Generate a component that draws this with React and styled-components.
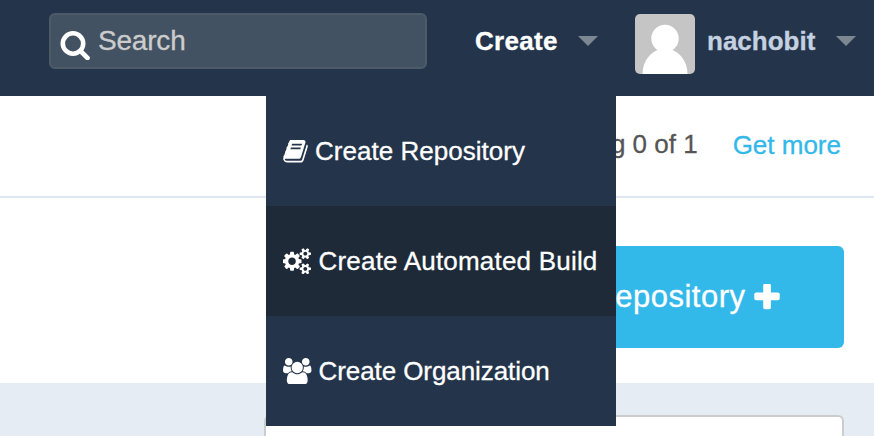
import React from 'react';
import styled, { createGlobalStyle } from 'styled-components';

const GlobalStyle = createGlobalStyle`
  *, *::before, *::after { box-sizing: border-box; }
  body {
    margin: 0;
    overflow: hidden;
    font-family: "Liberation Sans", Arial, sans-serif;
    font-size: 26px;
    line-height: 30px;
    background: #fff;
    -webkit-text-stroke: 0.3px currentColor;
  }
`;

const Page = styled.div`
  width: 874px;
  height: 436px;
  overflow: hidden;
  display: flex;
  flex-direction: column;
  position: relative;
`;

const TopBar = styled.header`
  flex: none;
  height: 96px;
  display: flex;
  align-items: flex-start;
  padding: 13px 18px 0 49px;
  background: #24354b;
`;

const SearchBox = styled.label`
  flex: none;
  width: 378px;
  height: 56px;
  display: flex;
  align-items: flex-start;
  gap: 8px;
  padding: 15px 10px 0 9px;
  border: 2px solid #4d5b69;
  border-radius: 6px;
  background: #435262;
`;

const SearchText = styled.span`
  color: #ccc;
  font-size: 28px;
  letter-spacing: -0.2px;
  margin-top: -4px;
`;

const NavItem = styled.div`
  display: flex;
  align-items: center;
  height: 56px;
  margin-left: ${(p) => p.$gap}px;
  color: ${(p) => p.$color};
  font-weight: 700;
  white-space: nowrap;
`;

const NavLabel = styled.span`
  width: ${(p) => p.$width}px;
  letter-spacing: ${(p) => p.$spacing || 0}px;
`;

const Caret = styled.i`
  border: 10px solid transparent;
  border-top-color: #7c8791;
  border-bottom: 0;
  margin-left: 20px;
`;

const Avatar = styled.svg`
  flex: none;
  width: 60px;
  height: 60px;
  margin: 5px 12px 0 0;
  border-radius: 5px;
`;

const Pager = styled.section`
  flex: none;
  height: 102px;
  display: flex;
  justify-content: flex-end;
  gap: 35px;
  padding: 33px 33px 0 0;
  border-bottom: 2px solid #dfe8f2;
  color: #555;
`;

const MoreLink = styled.a`
  color: #33b8ea;
  margin-top: 1px;
`;

const Actions = styled.section`
  flex: none;
  height: 185px;
  display: flex;
  justify-content: flex-end;
  padding: 48px 30px 0 0;
`;

const PrimaryButton = styled.button`
  width: 420px;
  height: 102px;
  display: flex;
  align-items: center;
  justify-content: flex-end;
  gap: 8.500px;
  padding: 0 64px 0 0;
  border: 0;
  border-radius: 6px;
  background: #33b8ea;
  color: #fff;
  font: 31px "Liberation Sans", Arial, sans-serif;
  letter-spacing: 0.5px;
`;

const ListArea = styled.section`
  flex: 1;
  padding: 32px 30px 0 264px;
  background: #e5ecf4;
  display: flex;
`;

const ListPanel = styled.div`
  flex: 1;
  border: 2px solid #ccc;
  border-bottom: 0;
  border-radius: 6px 6px 0 0;
  background: #fff;
`;

const Menu = styled.nav`
  position: absolute;
  top: 96px;
  left: 266px;
  width: 350px;
  background: #24354b;
`;

const MenuItem = styled.a`
  display: flex;
  align-items: center;
  height: 110px;
  padding-left: 17px;
  gap: 7px;
  color: #fff;
  white-space: nowrap;
  letter-spacing: ${(p) => p.$spacing}px;
  background: ${(p) => (p.$active ? '#1e2a38' : 'transparent')};
`;

const Icon = styled.svg`
  flex: none;
  width: ${(p) => p.$w}px;
  height: ${(p) => p.$h}px;
  fill: currentColor;
`;

const BOOK =
  'M1639 478q40 57 18 129l-275 906q-19 64-76.5 107.5t-122.5 43.5h-923q-77 0-148.5-53.5t-99.5-131.5q-24-67-2-127 0-4 3-27t4-37q1-8-3-21.5t-3-19.5q2-11 8-21t16.5-23.5 16.5-23.5q23-38 45-91.5t30-91.5q3-10 .5-30t-.5-28q3-11 17-28t17-23q21-36 42-92t25-90q1-9-2.5-32t.5-28q4-13 22-30.5t22-22.5q19-26 42.5-84.5t27.5-96.5q1-8-3-25.5t-2-26.5q2-8 9-18t18-23 17-21q8-12 16.5-30.5t15-35 16-36 19.5-32 26.5-23.5 36-11.5 47.5 5.5l-1 3q38-9 51-9h761q74 0 114 56t18 130l-274 906q-36 119-71.5 153.5t-128.5 34.5h-869q-27 0-38 15-11 16-1 43 24 70 144 70h923q29 0 56-15.5t35-41.5l300-987q7-22 5-57 38 15 59 43zm-1064 2q-4 13 2 22.5t20 9.5h608q13 0 25.5-9.5t16.5-22.5l21-64q4-13-2-22.5t-20-9.5h-608q-13 0-25.5 9.5t-16.5 22.5zm-83 256q-4 13 2 22.5t20 9.5h608q13 0 25.5-9.5t16.5-22.5l21-64q4-13-2-22.5t-20-9.5h-608q-13 0-25.5 9.5t-16.5 22.5z';

const SMALL_COG =
  'v140q0 16-149 31-12 27-30 52 51 113 51 138 0 4-4 7-122 71-124 71-8 0-46-47t-52-68q-20 2-30 2t-30-2q-14 21-52 68t-46 47q-2 0-124-71-4-3-4-7 0-25 51-138-18-25-30-52-149-15-149-31v-140q0-16 149-31 13-29 30-52-51-113-51-138 0-4 4-7 4-2 35-20t59-34 30-16q8 0 46 46.5t52 67.5q20-2 30-2t30 2q51-71 92-112l6-2q4 0 124 70 4 3 4 7 0 25-51 138 17 23 30 52 149 15 149 31z';

const COGS =
  'M832 896q0-106-75-181t-181-75-181 75-75 181 75 181 181 75 181-75 75-181zm768 512q0-52-38-90t-90-38-90 38-38 90q0 53 37.5 90.5t90.5 37.5 90.5-37.5 37.5-90.5zm0-1024q0-52-38-90t-90-38-90 38-38 90q0 53 37.5 90.5t90.5 37.5 90.5-37.5 37.5-90.5zm-384 421v185q0 10-7 19.5t-16 10.5l-155 24q-11 35-32 76 34 48 90 115 7 11 7 20 0 12-7 19-23 30-82.5 89.5t-78.5 59.5q-11 0-21-7l-115-90q-37 19-77 31-11 108-23 155-7 24-30 24h-186q-11 0-20-7.5t-10-17.5l-23-153q-34-10-75-31l-118 89q-7 7-20 7-11 0-21-8-144-133-144-160 0-9 7-19 10-14 41-53t47-61q-23-44-35-82l-152-24q-10-1-17-9.5t-7-19.5v-185q0-10 7-19.5t16-10.5l155-24q11-35 32-76-34-48-90-115-7-11-7-20 0-12 7-20 22-30 82-89t79-59q11 0 21 7l115 90q34-18 77-32 11-108 23-154 7-24 30-24h186q11 0 20 7.5t10 17.5l23 153q34 10 75 31l118-89q8-7 20-7 11 0 21 8 144 133 144 160 0 8-7 19-12 16-42 54t-45 60q23 48 34 82l152 23q10 2 17 10.5t7 19.5zm640 533' +
  SMALL_COG +
  'm0-1024' +
  SMALL_COG;

const USERS =
  'M657 896q-162 5-265 128h-134q-82 0-138-40.5t-56-118.5q0-353 124-353 6 0 43.5 21t97.5 42.5 119 21.5q67 0 133-23-5 37-5 66 0 139 81 256zm1071 637q0 120-73 189.5t-194 69.5h-874q-121 0-194-69.5t-73-189.5q0-53 3.5-103.5t14-109 26.5-108.5 43-97.5 62-81 85.5-53.5 111.5-20q10 0 43 21.5t73 48 107 48 135 21.5 135-21.5 107-48 73-48 43-21.5q61 0 111.5 20t85.5 53.5 62 81 43 97.5 26.5 108.5 14 109 3.5 103.5zm-1024-1277q0 106-75 181t-181 75-181-75-75-181 75-181 181-75 181 75 75 181zm704 384q0 159-112.5 271.5t-271.5 112.5-271.5-112.5-112.5-271.5 112.5-271.5 271.5-112.5 271.5 112.5 112.5 271.5zm576 225q0 78-56 118.5t-138 40.5h-134q-103-123-265-128 81-117 81-256 0-29-5-66 66 23 133 23 59 0 119-21.5t97.5-42.5 43.5-21q124 0 124 353zm-128-609q0 106-75 181t-181 75-181-75-75-181 75-181 181-75 181 75 75 181z';

const menuItems = [
  { label: 'Create Repository', path: BOOK, viewBox: '0 0 1664 1792', w: 25, spacing: 0.03 },
  { label: 'Create Automated Build', path: COGS, viewBox: '0 0 1856 1792', w: 28.5, spacing: 0.2, active: true },
  { label: 'Create Organization', path: USERS, viewBox: '64 0 1920 1792', w: 28.5, spacing: -0.08 },
];

export default function App() {
  return (
    <Page>
      <GlobalStyle />
      <TopBar>
        <SearchBox>
          <Icon $w={30} $h={30} viewBox="0 0 30 30">
            <circle cx="13" cy="13.5" r="10.2" fill="none" stroke="#fff" strokeWidth="4.6" />
            <path d="M21 21.5L27.5 28" stroke="#fff" strokeWidth="4.6" strokeLinecap="round" />
          </Icon>
          <SearchText>Search</SearchText>
        </SearchBox>
        <NavItem $gap={48} $color="#fff">
          <NavLabel $width={83} $spacing={0.3}>Create</NavLabel>
          <Caret />
        </NavItem>
        <NavItem $gap={37} $color="#c5d1e0">
          <Avatar viewBox="0 0 60 60">
            <rect width="60" height="60" fill="#c5c5c5" />
            <ellipse cx="30" cy="24.5" rx="13.7" ry="13.8" fill="#fff" />
            <ellipse cx="30" cy="60" rx="22.5" ry="25.5" fill="#fff" />
          </Avatar>
          <NavLabel $width={109}>nachobit</NavLabel>
          <Caret />
        </NavItem>
      </TopBar>
      <Pager>
        <span>Showing 0 of 1</span>
        <MoreLink>Get more</MoreLink>
      </Pager>
      <Actions>
        <PrimaryButton>
          <span>Create Repository</span>
          <Icon $w={26} $h={26} viewBox="0 0 26 26">
            <rect x="0.3" y="8.5" width="25.4" height="7.7" rx="1.8" />
            <rect x="9.2" y="-0.2" width="7.7" height="25.4" rx="1.8" />
          </Icon>
        </PrimaryButton>
      </Actions>
      <ListArea>
        <ListPanel />
      </ListArea>
      <Menu>
        {menuItems.map((item) => (
          <MenuItem key={item.label} $active={item.active} $spacing={item.spacing}>
            <Icon $w={item.w} $h={26.5} viewBox={item.viewBox}>
              <path d={item.path} />
            </Icon>
            <span>{item.label}</span>
          </MenuItem>
        ))}
      </Menu>
    </Page>
  );
}
